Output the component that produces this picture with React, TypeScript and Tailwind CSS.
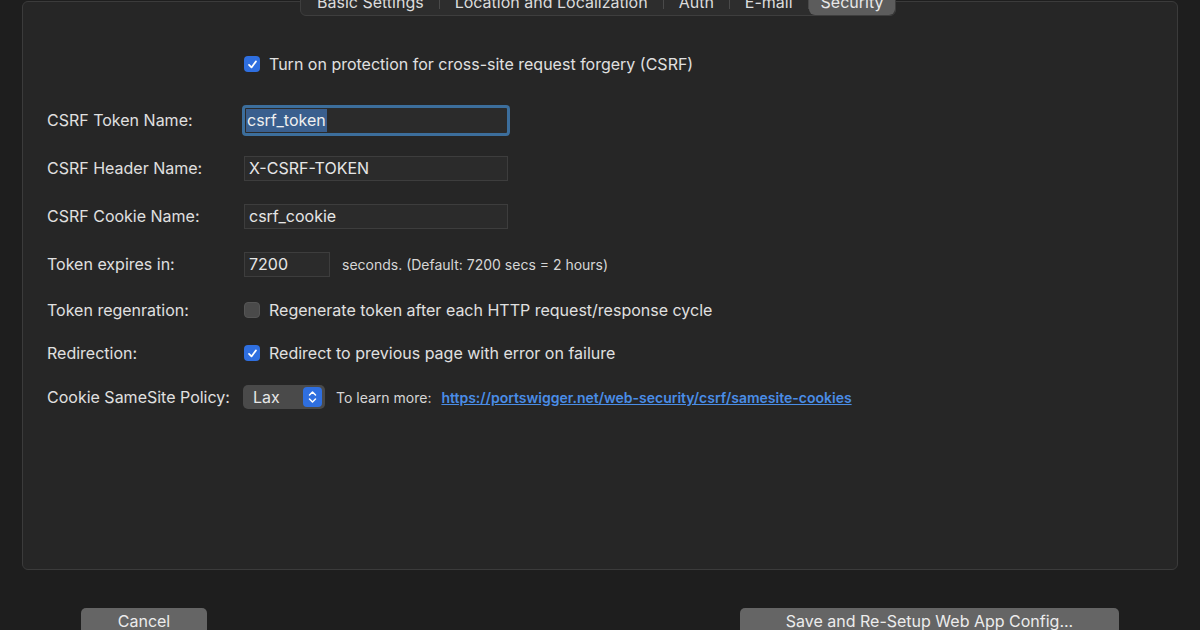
import React from "react";

const font = { fontFamily: "Inter, 'Liberation Sans', Arial, sans-serif" };

function Check({ checked }: { checked: boolean }) {
  return checked ? (
    <div className="w-[16px] h-[16px] rounded-[4px] bg-[#2f6fe0] flex items-center justify-center shrink-0">
      <svg width="11" height="11" viewBox="0 0 12 12">
        <path d="M2.2 6.4 L4.9 9.2 L9.8 2.6" fill="none" stroke="#fff" strokeWidth="1.9" strokeLinecap="round" strokeLinejoin="round" />
      </svg>
    </div>
  ) : (
    <div className="w-[16px] h-[16px] rounded-[4px] bg-[#4a4a4a] border border-[#555] shrink-0" />
  );
}

function Label({ children }: { children: React.ReactNode }) {
  return <div className="w-[197px] shrink-0 text-[16px] text-[#e0e0e0]">{children}</div>;
}

function Field({ value, w }: { value: string; w: string }) {
  return (
    <div className={`${w} h-[25px] bg-[#2b2b2b] border border-[#3d3d3d] flex items-center px-[4px] text-[16px] text-[#e6e6e6]`}>
      {value}
    </div>
  );
}

export default function App() {
  const tabs = ["Basic Settings", "Location and Localization", "Auth", "E-mail"];
  return (
    <div className="w-[1200px] h-[630px] bg-[#1e1e1e] overflow-hidden flex flex-col" style={font}>
      <div className="relative mx-[22px] mt-[1px] h-[569px] bg-[#262626] border border-[#3b3b3b] rounded-[6px] shrink-0">
        <div className="absolute left-[277px] top-[-14px] h-[28px] flex items-stretch rounded-[6px] bg-[#2d2d2d] border border-[#3e3e3e] text-[16px] text-[#dcdcdc]">
          {tabs.map((t, i) => (
            <div key={t} className="flex items-center">
              <div className={i === 0 ? "pl-[16px] pr-[15px]" : "px-[15px]"}>{t}</div>
              <div className="w-[1px] h-[14px] bg-[#4a4a4a]" />
            </div>
          ))}
          <div className="flex items-center px-[12px] bg-[#5c5c5c] rounded-[6px] text-[#e8e8e8]">Security</div>
        </div>

        <div className="flex flex-col pl-[24px] pt-[47px]">
          <div className="h-[30px] flex items-center">
            <div className="w-[197px] shrink-0" />
            <div className="flex items-center gap-[9px] text-[16px] text-[#e0e0e0]">
              <Check checked />
              <span>Turn on protection for cross-site request forgery (CSRF)</span>
            </div>
          </div>

          <div className="h-[30px] mt-[26px] flex items-center">
            <Label>CSRF Token Name:</Label>
            <div className="ml-[-2px] w-[268px] h-[31px] rounded-[4px] border-[3px] border-[#3c6e9c] bg-[#2b2b2b] flex items-center px-[1px]">
              <span className="bg-[#3a5f8e] text-[16px] text-[#f0f0f0] px-[1px] leading-[23px]">csrf_token</span>
            </div>
          </div>

          <div className="h-[30px] mt-[18px] flex items-center">
            <Label>CSRF Header Name:</Label>
            <Field value="X-CSRF-TOKEN" w="w-[264px]" />
          </div>

          <div className="h-[30px] mt-[18px] flex items-center">
            <Label>CSRF Cookie Name:</Label>
            <Field value="csrf_cookie" w="w-[264px]" />
          </div>

          <div className="h-[30px] mt-[18px] flex items-center">
            <Label>Token expires in:</Label>
            <Field value="7200" w="w-[86px]" />
            <span className="ml-[12px] text-[14px] text-[#d6d6d6]">seconds. (Default: 7200 secs = 2 hours)</span>
          </div>

          <div className="h-[30px] mt-[16px] flex items-center">
            <Label>Token regenration:</Label>
            <div className="flex items-center gap-[9px] text-[16px] text-[#e0e0e0]">
              <Check checked={false} />
              <span>Regenerate token after each HTTP request/response cycle</span>
            </div>
          </div>

          <div className="h-[30px] mt-[13px] flex items-center">
            <Label>Redirection:</Label>
            <div className="flex items-center gap-[9px] text-[16px] text-[#e0e0e0]">
              <Check checked />
              <span>Redirect to previous page with error on failure</span>
            </div>
          </div>

          <div className="h-[30px] mt-[14px] flex items-center">
            <Label>Cookie SameSite Policy:</Label>
            <div className="ml-[-1px] w-[82px] h-[24px] rounded-[5px] bg-[#4a4a4a] flex items-center justify-between pl-[10px] pr-[3px] text-[16px] text-[#e6e6e6]">
              <span>Lax</span>
              <div className="w-[19px] h-[20px] rounded-[4px] bg-[#2f6fe0] flex items-center justify-center">
                <svg width="9" height="14" viewBox="0 0 9 14">
                  <path d="M1.5 5 L4.5 2 L7.5 5 M1.5 9 L4.5 12 L7.5 9" fill="none" stroke="#fff" strokeWidth="1.5" strokeLinecap="round" strokeLinejoin="round" />
                </svg>
              </div>
            </div>
            <span className="ml-[11px] text-[14px] text-[#d6d6d6]">To learn more:</span>
            <span className="ml-[10px] text-[14px] font-semibold text-[#4a8de6] underline">https://portswigger.net/web-security/csrf/samesite-cookies</span>
          </div>
        </div>
      </div>

      <div className="flex mt-[38px]">
        <div className="ml-[81px] w-[126px] h-[30px] rounded-[5px] bg-[#656565] text-[16px] text-[#ececec] flex justify-center pt-[1px]">Cancel</div>
        <div className="ml-[533px] w-[379px] h-[30px] rounded-[5px] bg-[#656565] text-[16px] text-[#ececec] flex justify-center pt-[1px]">Save and Re-Setup Web App Config...</div>
      </div>
    </div>
  );
}
